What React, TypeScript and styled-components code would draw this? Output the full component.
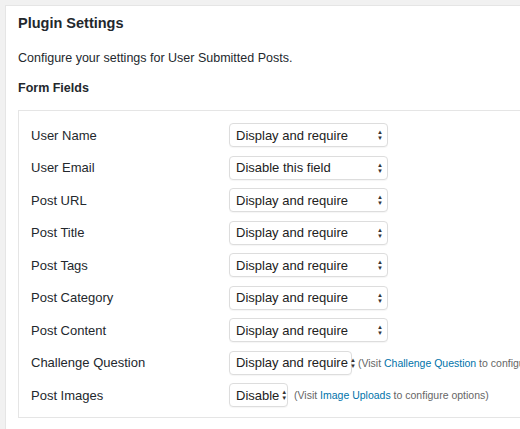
import React from "react";
import styled, { createGlobalStyle } from "styled-components";

const G = createGlobalStyle`
  body { margin: 0; background: #f1f1f1; font-family: "Liberation Sans", Arial, sans-serif; color: #23282d; overflow: hidden; }
`;
const Panel = styled.div`
  margin: 5px 0 0 5px; width: 530px; height: 440px; background: #fff; border: 1px solid #e5e5e5;
  padding: 0 0 0 12px; box-sizing: border-box;
`;
const Title = styled.h2`font-size: 14.5px; font-weight: 600; margin: 9px 0 0; line-height: 16px;`;
const Desc = styled.p`font-size: 12.5px; margin: 19px 0 0; line-height: 16px;`;
const Sub = styled.h3`font-size: 12.5px; font-weight: 600; margin: 14px 0 0; line-height: 16px;`;
const Box = styled.div`
  margin-top: 14px; border: 1px solid #e5e5e5; border-right: none; height: 308px; box-sizing: border-box;
  padding: 12px 0 0 12px; display: flex; flex-direction: column; gap: 8.5px;
`;
const Row = styled.div`display: flex; align-items: center; height: 24px;`;
const Label = styled.div`width: 198px; font-size: 13px;`;
const Select = styled.div<{ w: number }>`
  width: ${p => p.w}px; height: 24px; box-sizing: border-box; border: 1px solid #ddd; border-radius: 4px;
  display: flex; align-items: center; justify-content: space-between; padding: 0 4px 0 6px; white-space: nowrap;
  font-size: 13px; color: #222; background: #fff; box-shadow: 0 1px 1px rgba(0,0,0,0.04); flex-shrink: 0;
`;
const Arrows = styled.span`font-size: 6px; line-height: 6px; display: flex; flex-direction: column; color: #333; margin-left: 2px;`;
const Note = styled.span`font-size: 10.5px; color: #666; margin-left: 6px; white-space: nowrap;`;
const Link = styled.span`color: #0073aa;`;

const rows: [string, string, number, React.ReactNode?][] = [
  ["User Name", "Display and require", 159],
  ["User Email", "Disable this field", 159],
  ["Post URL", "Display and require", 159],
  ["Post Title", "Display and require", 159],
  ["Post Tags", "Display and require", 159],
  ["Post Category", "Display and require", 159],
  ["Post Content", "Display and require", 159],
  ["Challenge Question", "Display and require", 123, <>(Visit <Link>Challenge Question</Link> to configure</>],
  ["Post Images", "Disable", 59, <>(Visit <Link>Image Uploads</Link> to configure options)</>],
];

export default function App() {
  return (
    <>
      <G />
      <Panel>
        <Title>Plugin Settings</Title>
        <Desc>Configure your settings for User Submitted Posts.</Desc>
        <Sub>Form Fields</Sub>
        <Box>
          {rows.map(([l, v, w, n]) => (
            <Row key={l}>
              <Label>{l}</Label>
              <Select w={w}>{v}<Arrows><span>▲</span><span>▼</span></Arrows></Select>
              {n && <Note>{n}</Note>}
            </Row>
          ))}
        </Box>
      </Panel>
    </>
  );
}
